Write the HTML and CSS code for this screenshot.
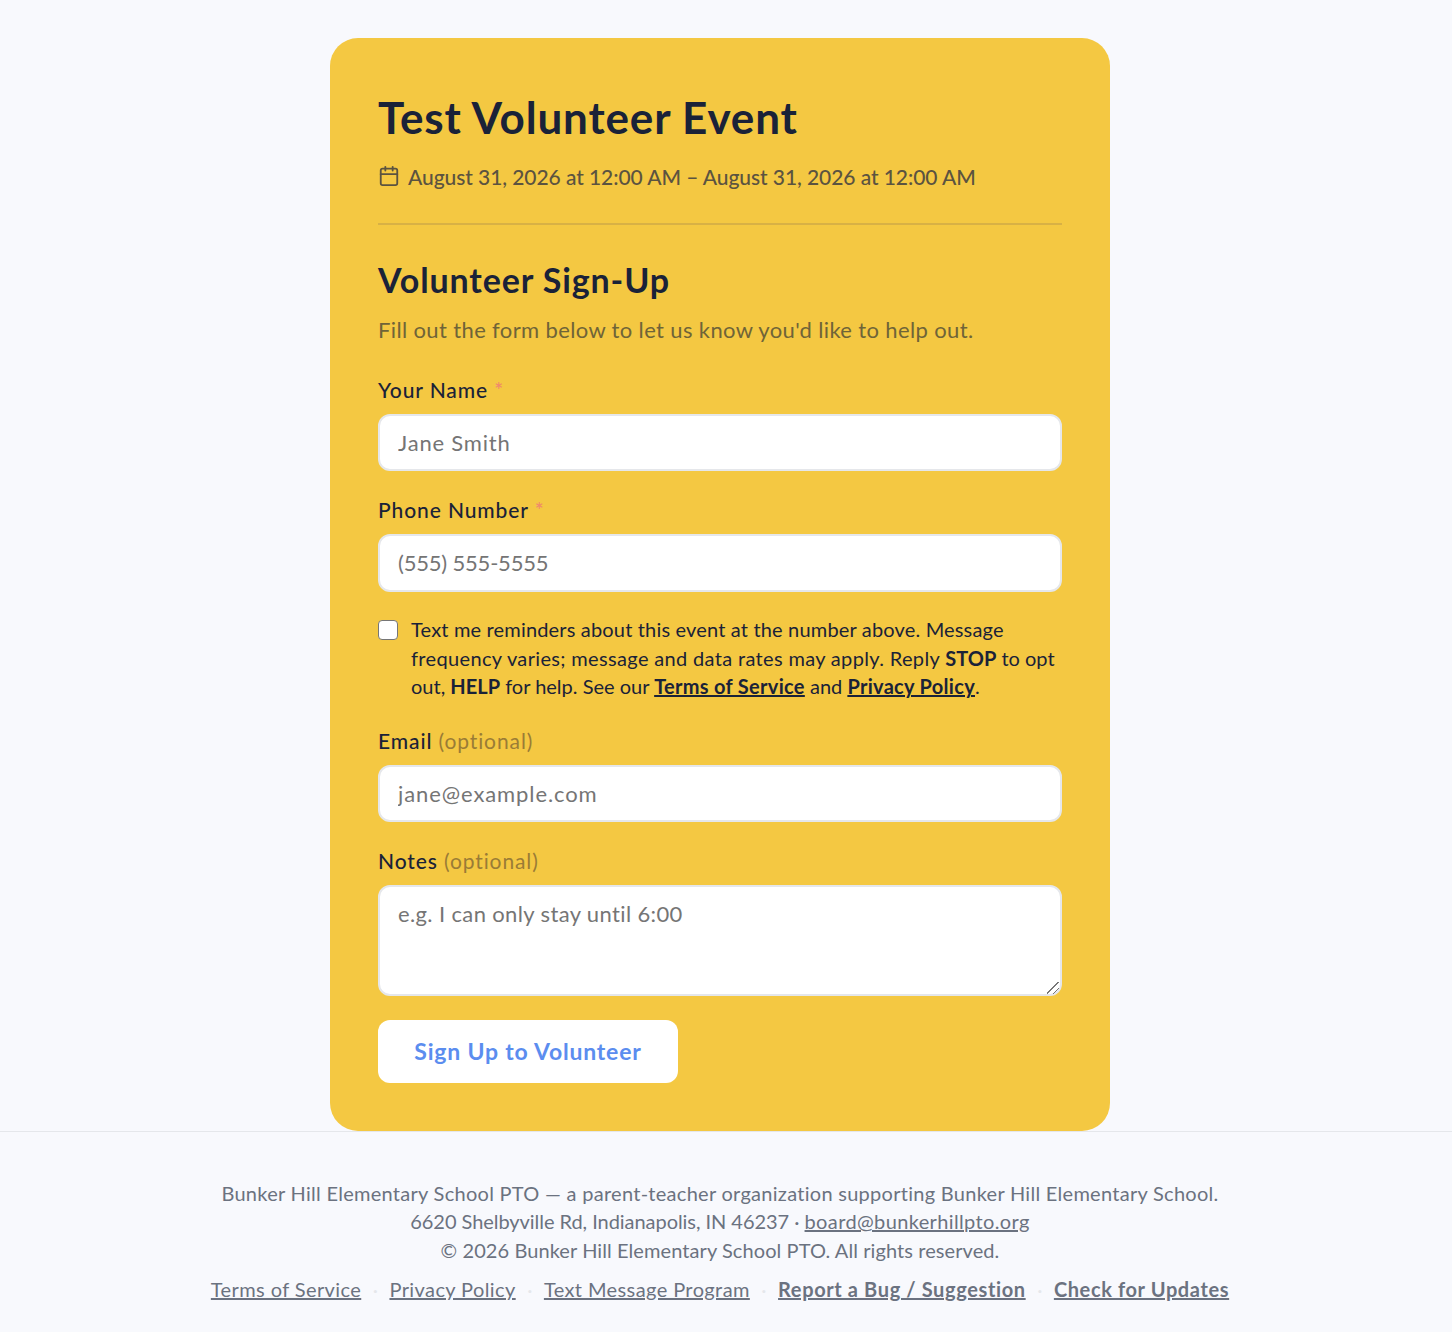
FILE: index.html
```html
<!DOCTYPE html>
<html lang="en">

<head>
    <meta charset="UTF-8">
    <meta name="viewport" content="width=device-width, initial-scale=1.0">
    <title>Test Volunteer Event</title>
    <link rel="stylesheet" href="styles.css">
</head>

<body>
    <main class="page">
        <div class="card">
            <h1 class="title">Test Volunteer Event</h1>
            <div class="when">
                <svg class="when-icon" viewBox="0 0 24 24" fill="none" stroke="currentColor" stroke-width="2" stroke-linecap="round" stroke-linejoin="round">
                    <path d="M8 2v4"></path>
                    <path d="M16 2v4"></path>
                    <rect x="3" y="4" width="18" height="18" rx="2"></rect>
                    <path d="M3 10h18"></path>
                </svg>
                <span>August 31, 2026 at 12:00 AM – August 31, 2026 at 12:00 AM</span>
            </div>
            <hr class="divider">
            <h2 class="form-title">Volunteer Sign-Up</h2>
            <p class="form-intro">Fill out the form below to let us know you'd like to help out.</p>
            <form>
                <div class="field">
                    <label class="label" for="name">Your Name <span class="req">*</span></label>
                    <input class="input input-name" id="name" type="text" placeholder="Jane Smith">
                </div>
                <div class="field">
                    <label class="label" for="phone">Phone Number <span class="req">*</span></label>
                    <input class="input input-phone" id="phone" type="text" placeholder="(555) 555-5555">
                </div>
                <div class="consent">
                    <input class="consent-box" id="sms" type="checkbox">
                    <label class="consent-text" for="sms"><span class="consent-first">Text me reminders about this event at the number above. Message</span> <span class="consent-wide">frequency varies; message and data rates may apply. Reply</span> <strong>STOP</strong> to opt out, <strong>HELP</strong> for help. See our <a href="#">Terms of Service</a> and <a href="#">Privacy Policy</a>.</label>
                </div>
                <div class="field">
                    <label class="label" for="email">Email <span class="opt">(optional)</span></label>
                    <input class="input input-email" id="email" type="text" placeholder="jane@example.com">
                </div>
                <div class="field">
                    <label class="label" for="notes">Notes <span class="opt">(optional)</span></label>
                    <textarea class="input notes" id="notes" placeholder="e.g. I can only stay until 6:00"></textarea>
                </div>
                <button class="submit" type="button">Sign Up to Volunteer</button>
            </form>
        </div>
    </main>
    <footer class="footer">
        <p class="footer-text"><span class="footer-about">Bunker Hill Elementary School PTO — a parent-teacher organization supporting Bunker Hill Elementary School.</span><br>
            <span class="footer-address">6620 Shelbyville Rd, Indianapolis, IN 46237 ·</span> <a href="#">board@bunkerhillpto.org</a><br>
            © 2026 Bunker Hill Elementary School PTO. All rights reserved.</p>
        <div class="footer-links">
            <a href="#">Terms of Service</a>
            <span class="dot">·</span>
            <a href="#">Privacy Policy</a>
            <span class="dot">·</span>
            <a href="#">Text Message Program</a>
            <span class="dot">·</span>
            <a class="strong" href="#">Report a Bug / Suggestion</a>
            <span class="dot">·</span>
            <a class="strong" href="#">Check for Updates</a>
        </div>
    </footer>
</body>

</html>
```

FILE: styles.css
```css
* {
    box-sizing: border-box;
}

body {
    margin: 0;
    background-color: #f8f9fd;
    color: #1a2238;
    font-family: "Lato", "Open Sans", sans-serif;
}

/* the original was laid out beside a 12px scrollbar */
.page {
    display: flex;
    justify-content: center;
    padding: 38px 12px 0 0;
}

.card {
    width: 780px;
    padding: 48px;
    background-color: #f4c842;
    border-radius: 28px;
}

.title {
    margin: 0 0 14px;
    font-size: 44px;
    font-weight: 700;
    line-height: 62px;
    letter-spacing: 0.85px;
}

.when {
    display: flex;
    align-items: center;
    gap: 8px;
    height: 28px;
    color: #5b5340;
    font-size: 21px;
    font-weight: 500;
    letter-spacing: -0.07px;
}

.when-icon {
    width: 22px;
    height: 22px;
    flex-shrink: 0;
}

.divider {
    height: 2px;
    margin: 33px 0 34px;
    border: 0;
    background-color: #d8b145;
}

.form-title {
    margin: 0 0 13px;
    font-size: 34px;
    font-weight: 700;
    line-height: 42px;
    letter-spacing: 0.87px;
}

.form-intro {
    margin: 0 0 30px;
    color: #6f6438;
    font-size: 22px;
    line-height: 32px;
    letter-spacing: 0.365px;
}

.field {
    margin-bottom: 24.8px;
}

.label {
    display: block;
    margin-bottom: 10px;
    font-size: 21px;
    font-weight: 500;
    line-height: 28px;
    letter-spacing: 0.9px;
}

.req {
    color: #f08a6c;
}

.opt {
    color: #9a7c36;
    font-weight: 400;
}

.input {
    display: block;
    width: 100%;
    height: 57.4px;
    padding: 0 18px;
    background-color: #fff;
    border: 2px solid #e5e7eb;
    border-radius: 12px;
    color: #1a2238;
    font-family: inherit;
    font-size: 22px;
    letter-spacing: 0.37px;
}

.input-name {
    letter-spacing: 0.8px;
}

.input-phone {
    letter-spacing: -0.2px;
}

.input-email {
    letter-spacing: 0.9px;
}

.notes {
    height: 111px;
    padding: 12px 18px;
    line-height: 30px;
    resize: vertical;
}

.notes::-webkit-resizer {
    background-image: linear-gradient(135deg, transparent 42%, #777 42%, #777 50%, transparent 50%, transparent 71%, #777 71%, #777 79%, transparent 79%);
    background-position: 2px 3px;
    background-repeat: no-repeat;
    background-size: 12px 12px;
}

.consent {
    display: flex;
    gap: 13px;
    margin: -1px 0 26.1px;
}

.consent-box {
    width: 20px;
    height: 20px;
    margin: 5px 0 0;
    flex-shrink: 0;
    appearance: none;
    background-color: #fff;
    border: 1.5px solid #767676;
    border-radius: 4px;
}

.consent-text {
    font-size: 20px;
    line-height: 28.5px;
}

.consent-first {
    letter-spacing: 0.17px;
}

.consent-wide {
    letter-spacing: 0.34px;
}

.consent-text a {
    color: inherit;
    font-weight: 700;
    letter-spacing: 0.3px;
}

.submit {
    display: block;
    width: 300px;
    height: 63px;
    margin-top: -1px;
    padding: 0;
    background-color: #fff;
    border: 0;
    border-radius: 12px;
    color: #5b8def;
    font-family: inherit;
    font-size: 23px;
    font-weight: 700;
    letter-spacing: 0.8px;
}

.footer {
    padding: 46.8px 36px 28px 24px;
    border-top: 1px solid #e5e7eb;
    color: #6b7280;
    font-size: 20px;
    text-align: center;
}

.footer-text {
    margin: 0 0 10.7px;
    line-height: 28.5px;
    letter-spacing: 0.08px;
}

.footer-about {
    letter-spacing: 0.28px;
}

.footer-address {
    letter-spacing: -0.05px;
}

.footer-text a {
    letter-spacing: 0.37px;
}

.footer a {
    color: inherit;
}

.footer-links {
    display: flex;
    justify-content: center;
    gap: 11.5px;
    line-height: 28px;
    letter-spacing: 0.4px;
}

.footer-links .strong {
    font-weight: 700;
    letter-spacing: 0.62px;
}

.dot {
    color: #e5e7eb;
    letter-spacing: 0;
}
```
